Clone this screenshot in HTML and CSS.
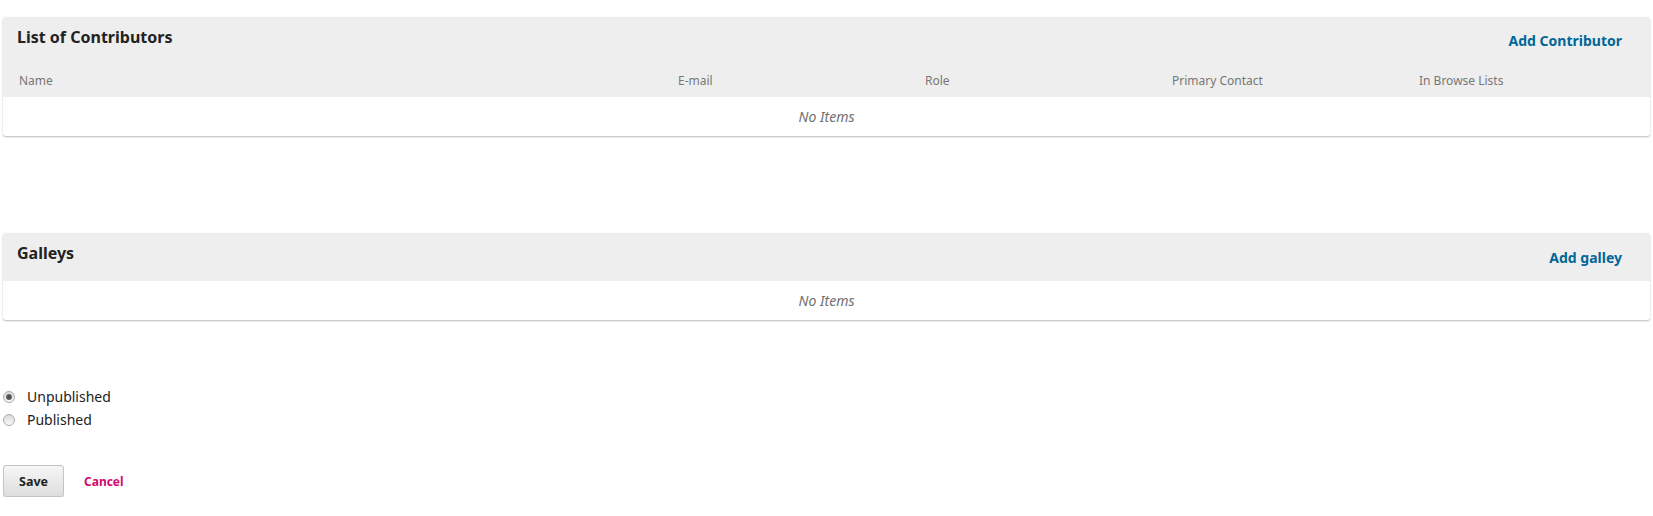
FILE: index.html
```html
<!DOCTYPE html>
<html lang="en">
<head>
<meta charset="utf-8">
<title>Publication</title>
<link rel="stylesheet" href="styles.css">
</head>
<body>
<div class="page">
  <section class="grid">
    <div class="grid-head">
      <h4 class="grid-title">List of Contributors</h4>
      <a class="grid-action" href="#">Add Contributor</a>
    </div>
    <div class="grid-cols">
      <span>Name</span>
      <span>E-mail</span>
      <span>Role</span>
      <span>Primary Contact</span>
      <span>In Browse Lists</span>
    </div>
    <div class="grid-empty">No Items</div>
  </section>

  <section class="grid galleys">
    <div class="grid-head">
      <h4 class="grid-title">Galleys</h4>
      <a class="grid-action action-low" href="#">Add galley</a>
    </div>
    <div class="grid-empty">No Items</div>
  </section>

  <div class="status">
    <label class="radio"><span class="radio-dot checked"></span>Unpublished</label>
    <label class="radio"><span class="radio-dot"></span>Published</label>
  </div>

  <div class="buttons">
    <button class="save" type="button">Save</button>
    <a class="cancel" href="#">Cancel</a>
  </div>
</div>
</body>
</html>
```

FILE: styles.css
```css
* { box-sizing: border-box; }

html, body {
  margin: 0;
  padding: 0;
  background: #fff;
}

body {
  font-family: "Noto Sans", "Open Sans", "Liberation Sans", sans-serif;
  color: #222;
}

.page {
  padding: 17px 3px 0 3px;
}

.grid {
  background: #fff;
  border-radius: 3px;
  box-shadow: 0 1px 2px rgba(0, 0, 0, 0.28);
  overflow: hidden;
}

.galleys {
  margin-top: 97px;
}

.grid-head {
  display: flex;
  justify-content: space-between;
  align-items: flex-start;
  height: 48px;
  background: #eee;
  padding: 0 28px 0 14px;
}

.grid-title {
  margin: 0;
  padding-top: 8px;
  font-size: 16px;
  line-height: 24px;
  font-weight: 700;
  color: #222;
}

.grid-action {
  padding-top: 14px;
  font-size: 14px;
  line-height: 20px;
  font-weight: 700;
  color: #006798;
  text-decoration: none;
}

.action-low {
  padding-top: 15px;
}

.grid-cols {
  display: grid;
  grid-template-columns: 658px 247px 247px 247px 1fr;
  height: 32px;
  background: #eee;
  font-size: 12px;
  line-height: 31px;
  color: #777;
}

.grid-cols span {
  padding-left: 17px;
}

.grid-cols span:first-child {
  padding-left: 16px;
}

.grid-empty {
  height: 39px;
  line-height: 39px;
  text-align: center;
  font-size: 14px;
  font-style: italic;
  color: #707070;
}

.status {
  margin-top: 65px;
  display: flex;
  flex-direction: column;
}

.radio {
  display: flex;
  align-items: center;
  height: 23px;
  font-size: 14px;
  color: #222;
}

.radio-dot {
  position: relative;
  width: 12px;
  height: 12px;
  margin-right: 12px;
  border-radius: 50%;
  border: 1px solid #a9a9a9;
  background: linear-gradient(#dcdcdc, #f8f8f8);
}

.radio-dot.checked::after {
  content: "";
  position: absolute;
  left: 2px;
  top: 2px;
  width: 6px;
  height: 6px;
  border-radius: 50%;
  background: radial-gradient(circle, #444 0%, #666 70%, #888 100%);
}

.buttons {
  margin-top: 34px;
  display: flex;
  align-items: center;
  gap: 20px;
}

.save {
  height: 32px;
  padding: 0 15px;
  border: 1px solid #c4c4c4;
  border-radius: 3px;
  background: linear-gradient(#f6f6f6, #dedede);
  box-shadow: 0 1px 0 #cfcfcf;
  font-family: "Noto Sans", "Open Sans", "Liberation Sans", sans-serif;
  font-size: 12.5px;
  font-weight: 700;
  color: #222;
}

.cancel {
  font-size: 12px;
  font-weight: 700;
  color: #d00a6c;
  text-decoration: none;
}
```
